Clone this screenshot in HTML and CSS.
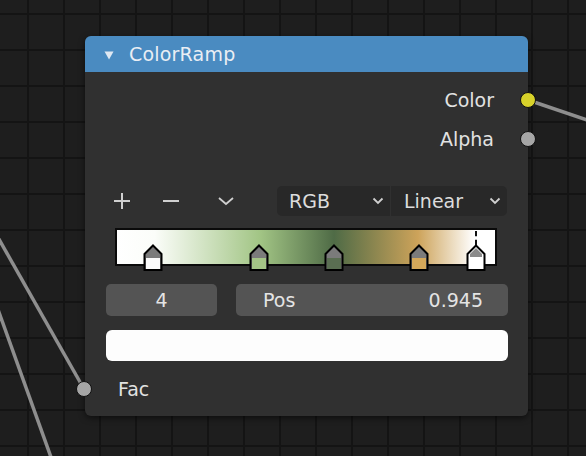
FILE: index.html
```html
<!DOCTYPE html>
<html>
<head>
<meta charset="utf-8">
<link rel="stylesheet" href="styles.css">
</head>
<body>
<div class="canvas">
  <svg class="wires" width="586" height="456" viewBox="0 0 586 456">
    <line x1="-4" y1="234" x2="84" y2="389" />
    <line x1="-4" y1="304" x2="52" y2="460" />
    <line x1="528" y1="100" x2="590" y2="121" />
  </svg>

  <div class="node">
    <div class="node-header">
      <svg class="collapse" width="10" height="9" viewBox="0 0 10 9"><path d="M0.5 0.5 H9.5 L5 8.5 Z" fill="#dfe8f2"/></svg>
      <span class="node-title">ColorRamp</span>
    </div>
    <div class="node-body">
      <div class="socket-row output">
        <span class="label">Color</span>
        <span class="socket yellow"></span>
      </div>
      <div class="socket-row output">
        <span class="label">Alpha</span>
        <span class="socket grey"></span>
      </div>

      <div class="toolbar">
        <div class="tool-icons">
          <svg width="20" height="20" viewBox="0 0 20 20"><path d="M10 2 V18 M2 10 H18" class="ico"/></svg>
          <svg width="20" height="20" viewBox="0 0 20 20"><path d="M2 10 H18" class="ico"/></svg>
          <svg class="chev-ico" width="20" height="20" viewBox="0 0 20 20"><path d="M3 7 L10 13 L17 7" class="ico thin"/></svg>
        </div>
        <div class="dropdowns">
          <div class="dropdown left">
            <span>RGB</span>
            <svg width="12" height="10" viewBox="0 0 12 10"><path d="M1.5 2.5 L6 7 L10.5 2.5" class="chev"/></svg>
          </div>
          <div class="dropdown right">
            <span>Linear</span>
            <svg width="12" height="10" viewBox="0 0 12 10"><path d="M1.5 2.5 L6 7 L10.5 2.5" class="chev"/></svg>
          </div>
        </div>
      </div>

      <div class="ramp-wrap">
        <div class="ramp"></div>
        <div class="marker" style="left: 10%">
          <svg width="22" height="28" viewBox="0 0 22 28"><path d="M11 1.5 L19.5 10 V26 H2.5 V10 Z" fill="#7b7b7b" stroke="#000" stroke-width="2"/><rect x="4" y="14" width="14" height="11" fill="#fbfbfb"/></svg>
        </div>
        <div class="marker" style="left: 37.8%">
          <svg width="22" height="28" viewBox="0 0 22 28"><path d="M11 1.5 L19.5 10 V26 H2.5 V10 Z" fill="#7b7b7b" stroke="#000" stroke-width="2"/><rect x="4" y="14" width="14" height="11" fill="#a4c486"/></svg>
        </div>
        <div class="marker" style="left: 57.4%">
          <svg width="22" height="28" viewBox="0 0 22 28"><path d="M11 1.5 L19.5 10 V26 H2.5 V10 Z" fill="#7b7b7b" stroke="#000" stroke-width="2"/><rect x="4" y="14" width="14" height="11" fill="#5a6e52"/></svg>
        </div>
        <div class="marker" style="left: 79.6%">
          <svg width="22" height="28" viewBox="0 0 22 28"><path d="M11 1.5 L19.5 10 V26 H2.5 V10 Z" fill="#7b7b7b" stroke="#000" stroke-width="2"/><rect x="4" y="14" width="14" height="11" fill="#d4a85a"/></svg>
        </div>
        <div class="marker selected" style="left: 94.5%">
          <svg width="22" height="28" viewBox="0 0 22 28"><path d="M11 1.5 L19.5 10 V26 H2.5 V10 Z" fill="#fff" stroke="#000" stroke-width="2"/><path d="M11 4 L17 10 V13 H5 V10 Z" fill="#8a8a8a"/><rect x="4" y="14" width="14" height="11" fill="#fff"/></svg>
        </div>
        <div class="marker-line" style="left: 94.5%"></div>
      </div>

      <div class="fields">
        <div class="field index">4</div>
        <div class="field pos"><span>Pos</span><span>0.945</span></div>
      </div>

      <div class="swatch"></div>

      <div class="socket-row input">
        <span class="socket grey"></span>
        <span class="label">Fac</span>
      </div>
    </div>
  </div>
</div>
</body>
</html>
```

FILE: styles.css
```css
* { box-sizing: border-box; }

html, body {
  margin: 0;
  padding: 0;
}

body {
  width: 586px;
  height: 456px;
  overflow: hidden;
  font-family: "DejaVu Sans", "Liberation Sans", sans-serif;
}

.canvas {
  position: relative;
  width: 586px;
  height: 456px;
  background-color: #1e1e1e;
  background-image:
    linear-gradient(to right, #141414 0, #141414 2px, transparent 2px),
    linear-gradient(to bottom, #141414 0, #141414 2px, transparent 2px);
  background-size: 36px 36px;
  background-position: 27px 13px;
}

.wires {
  position: absolute;
  left: 0;
  top: 0;
}

.wires line {
  stroke: #8e8e8e;
  stroke-width: 3.5;
}

.node {
  position: absolute;
  left: 85px;
  top: 36px;
  width: 443px;
  height: 380px;
  background: #303030;
  border-radius: 6px;
  box-shadow: 0 2px 6px rgba(0, 0, 0, 0.55);
}

.node-header {
  height: 36px;
  background: #4a8bc1;
  border-radius: 6px 6px 0 0;
  display: flex;
  align-items: center;
  padding-left: 19px;
  gap: 15px;
}

.collapse {
  margin-top: 2px;
}

.node-title {
  color: #e9eef4;
  font-size: 19px;
  letter-spacing: 0.2px;
}

.node-body {
  padding: 8px 0 0 0;
  display: flex;
  flex-direction: column;
}

.socket-row {
  position: relative;
  height: 39px;
  display: flex;
  align-items: center;
  color: #e2e2e2;
  font-size: 19px;
}

.socket-row.output {
  justify-content: flex-end;
  padding-right: 34px;
}

.socket-row.input {
  margin-top: 8px;
  padding-left: 33px;
}

.socket {
  position: absolute;
  width: 16px;
  height: 16px;
  border-radius: 50%;
  border: 1.5px solid #111;
  top: 50%;
  margin-top: -8px;
}

.socket-row.output .socket { right: -8px; }
.socket-row.input .socket { left: -9px; }

.socket.yellow { background: #d8d22a; }
.socket.grey { background: #a6a6a6; }

.toolbar {
  margin-top: 28px;
  height: 30px;
  display: flex;
  align-items: center;
  padding: 0 21px 0 27px;
}

.tool-icons {
  display: flex;
  gap: 29px;
  flex: 1;
}

.chev-ico {
  margin-left: 6px;
}

.ico {
  fill: none;
  stroke: #d0d0d0;
  stroke-width: 2;
}

.ico.thin { stroke-width: 1.8; }

.dropdowns {
  display: flex;
  gap: 1px;
  width: 230px;
  height: 30px;
}

.dropdown {
  background: #282828;
  display: flex;
  align-items: center;
  justify-content: space-between;
  color: #dcdcdc;
  font-size: 19px;
  padding: 0 6px 0 12px;
}

.dropdown.left {
  width: 113px;
  border-radius: 5px 0 0 5px;
}

.dropdown.right {
  width: 116px;
  border-radius: 0 5px 5px 0;
  padding-left: 13px;
}

.chev {
  fill: none;
  stroke: #d0d0d0;
  stroke-width: 1.8;
}

.ramp-wrap {
  position: relative;
  margin: 12px 31px 0 30px;
  height: 38px;
}

.ramp {
  height: 38px;
  border: 2px solid #0a0a0a;
  background: linear-gradient(to right,
    #ffffff 0%,
    #fbfdf9 10%,
    #a2c585 37.8%,
    #4f6b46 57.4%,
    #cda35a 79.6%,
    #ffffff 94.5%,
    #ffffff 100%);
}

.marker {
  position: absolute;
  top: 16px;
  width: 22px;
  height: 28px;
  margin-left: -11px;
}

.marker svg { display: block; }

.marker-line {
  position: absolute;
  top: 3px;
  height: 14px;
  width: 0;
  border-left: 2px dashed #111;
  margin-left: -1px;
}

.fields {
  margin-top: 18px;
  padding: 0 20px 0 21px;
  display: flex;
  gap: 19px;
  height: 32px;
}

.field {
  background: #545454;
  border-radius: 5px;
  color: #e4e4e4;
  font-size: 19px;
  display: flex;
  align-items: center;
}

.field.index {
  width: 111px;
  justify-content: center;
}

.field.pos {
  flex: 1;
  justify-content: space-between;
  padding: 0 25px 0 27px;
}

.swatch {
  margin: 14px 20px 0 21px;
  height: 31px;
  background: #fdfdfd;
  border-radius: 6px;
}
```
